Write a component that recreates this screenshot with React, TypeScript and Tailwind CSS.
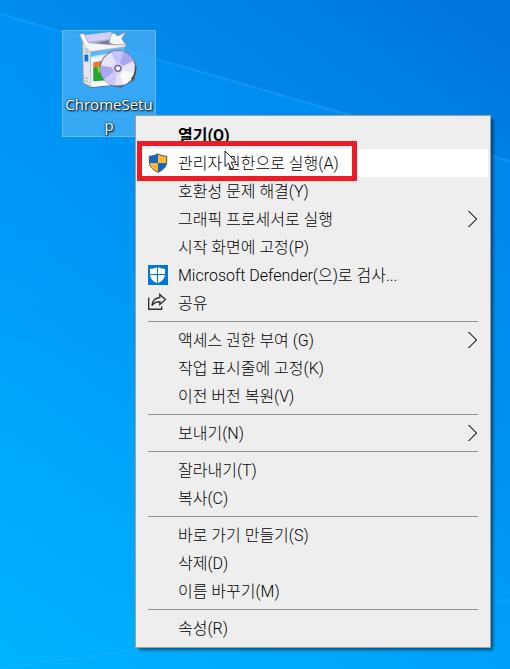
import React from "react";

type MenuItem = {
  label: string;
  icon?: React.ReactNode;
  bold?: boolean;
  active?: boolean;
  submenu?: boolean;
};

function AdminShieldIcon() {
  return (
    <svg width="20" height="20" viewBox="0 0 20 20" aria-hidden="true">
      <path d="M10 .8C7.5 2.2 4.5 3 1.2 3.2V10H10Z" fill="#1366c8" />
      <path d="M10 .8c2.5 1.4 5.5 2.2 8.8 2.4V10H10Z" fill="#fdb92a" />
      <path d="M1.3 10H10v9.4C5 17 2 14 1.3 10Z" fill="#fdb92a" />
      <path d="M18.7 10H10v9.4C15 17 18 14 18.7 10Z" fill="#1366c8" />
      <path
        d="M10 .9C7.5 2.3 4.5 3 1.3 3.2V9c0 4.5 3.2 8 8.7 10.3C15.5 17 18.7 13.5 18.7 9V3.2C15.5 3 12.5 2.3 10 .9Z"
        fill="none"
        stroke="#4b5660"
        strokeWidth="1"
      />
    </svg>
  );
}

function DefenderIcon() {
  return (
    <svg width="20" height="20" viewBox="0 0 20 20" aria-hidden="true">
      <rect width="20" height="20" fill="#0078d7" />
      <path
        d="M9.5 2C7.5 3.2 5 3.8 2 3.8V9c0 4.5 3 7.5 7.5 9.3C14 16.5 17 13.5 17 9V3.800C14 3.8 11.5 3.2 9.500 2Z"
        fill="#fff"
      />
      <path d="M9.5 1v18M1 9.5h17" stroke="#0078d7" strokeWidth="1" />
    </svg>
  );
}

function ShareIcon() {
  return (
    <svg
      width="20"
      height="20"
      viewBox="0 0 20 20"
      fill="none"
      stroke="#333"
      strokeWidth="1.4"
      aria-hidden="true"
    >
      <path d="M.7 4.500V16.300H13.700V13.500" />
      <path d="M11.8 1.500 17.500 6.500 11.800 11.500V8.700C8.500 8.700 6 9.500 4 12.500 4.500 8 7.500 4.800 11.800 4.500Z" />
    </svg>
  );
}

function SubmenuArrow() {
  return (
    <svg
      className="ml-auto"
      width="12"
      height="18"
      viewBox="0 0 12 18"
      fill="none"
      aria-hidden="true"
    >
      <path d="M2 1 10 9 2 17" stroke="#f0a050" />
      <path d="M3 1 11 9 3 17" stroke="#5c9ce0" />
      <path d="M2.5 1 10.5 9 2.5 17" stroke="#1a1018" strokeWidth="1" />
    </svg>
  );
}

function SetupIcon() {
  return (
    <svg width="60" height="60" viewBox="0 0 60 60" aria-hidden="true">
      <path d="M4 53 12 58 32 56 42 58 56 50 58 38 54 28Z" fill="#4a5560" opacity=".6" />

      {/* box body */}
      <path d="M3 11 11 20 12 57 4 53Z" fill="#e6e6ea" stroke="#9a9aa2" strokeWidth=".8" />
      <path d="M11 20 45 15 45 54 12 57Z" fill="#bfe6fb" />
      <path d="M11 20 45 15 45 20 11 26Z" fill="#62b8f6" />
      <path d="M12 28 24 25 22 50 12 57Z" fill="#eef8ff" />
      <path d="M13 52 32 50 32 55 12 57Z" fill="#fafafa" />
      <rect x="5" y="24" width="4" height="7" fill="#0d74d8" />
      <path d="M5 18 9 20M5 21 9 22M5 47 9 49M5 50 9 52" stroke="#a4a4ac" />

      {/* open lid */}
      <path d="M4 6 33 1 34 13 9 17Z" fill="#aeb4de" />
      <path d="M6 4 32 1 33 8 9 11Z" fill="#d4d0f8" />
      <path d="M12 13 32 9 32 14 12 17Z" fill="#77799c" />
      <path d="M0 3 5 3 9 12 32 14 47 13 47 16 11 21 5 15Z" fill="#f6f6f8" stroke="#a8a8b0" strokeWidth=".7" />
      <path d="M32 3 35 2 39 5 47 1 43 8 47 14 35 14 30 12Z" fill="#f4f4f6" stroke="#8e8e96" strokeWidth=".7" />

      <path d="M14 32 24 30 25 38 14 39Z" fill="#f27228" />
      <path d="M14 38 18 36 24 38 27 50 14 51Z" fill="#25a82c" />
      <path d="M18 36 24 35 24 43 19 42Z" fill="#8ed53c" />

      {/* disc */}
      <circle cx="39" cy="38" r="18" fill="#e6e4f8" stroke="#5e6070" strokeWidth="1" />
      <path d="M39 38 32 21.5A18 18 0 0 1 45 21.2Z" fill="#c6c2fc" />
      <path d="M39 38 45 21.2A18 18 0 0 1 55 30.5Z" fill="#aaa5f4" />
      <path d="M39 38 21.5 35A18 18 0 0 0 25 49.5Z" fill="#aaa5f4" />
      <path d="M39 38 25 49.5A18 18 0 0 0 36 55.6Z" fill="#cbc8fb" />
      <path d="M39 38 45 54.8A18 18 0 0 0 56 43Z" fill="#f8f8fc" />
      <circle cx="39" cy="38" r="5.5" fill="#ecc8ee" />
      <circle cx="39" cy="38" r="3" fill="#fff" stroke="#6a6c98" strokeWidth="1.5" />
      <path d="M53 49A18 18 0 0 0 57 36" fill="none" stroke="#444" strokeWidth="1.5" />
    </svg>
  );
}

function Pointer() {
  return (
    <svg
      className="pointer-events-none absolute left-[224px] top-[150px]"
      width="14"
      height="21"
      viewBox="0 0 14 21"
      aria-hidden="true"
    >
      <path
        d="M1 1V16.5L4.5 13.2 7 19 9.7 17.8 7.2 12.2H12Z"
        fill="#fff"
        stroke="#1c1c2c"
      />
    </svg>
  );
}

function Wallpaper() {
  return (
    <svg
      className="absolute inset-0 h-full w-full"
      viewBox="0 0 510 669"
      preserveAspectRatio="none"
      aria-hidden="true"
    >
      <defs>
        <linearGradient id="beam" x1="0" y1="0" x2="0" y2="1">
          <stop offset="0" stopColor="#0098ff" stopOpacity=".5" />
          <stop offset="1" stopColor="#0098ff" stopOpacity="0" />
        </linearGradient>
      </defs>
      <path d="M0 14 510 161V480L0 333Z" fill="url(#beam)" />
      <path d="M0 14 510 161" stroke="#3cb4ff" strokeOpacity=".3" strokeWidth="2" />
      <path d="M0 668 510 600" stroke="#3cb4ff" strokeOpacity=".2" strokeWidth="2" />
    </svg>
  );
}

const groups: MenuItem[][] = [
  [
    { label: "열기(O)", bold: true },
    { label: "관리자 권한으로 실행(A)", icon: <AdminShieldIcon />, active: true },
    { label: "호환성 문제 해결(Y)" },
    { label: "그래픽 프로세서로 실행", submenu: true },
    { label: "시작 화면에 고정(P)" },
    { label: "Microsoft Defender(으)로 검사...", icon: <DefenderIcon /> },
    { label: "공유", icon: <ShareIcon /> },
  ],
  [
    { label: "액세스 권한 부여 (G)", submenu: true },
    { label: "작업 표시줄에 고정(K)" },
    { label: "이전 버전 복원(V)" },
  ],
  [{ label: "보내기(N)", submenu: true }],
  [{ label: "잘라내기(T)" }, { label: "복사(C)" }],
  [
    { label: "바로 가기 만들기(S)" },
    { label: "삭제(D)" },
    { label: "이름 바꾸기(M)" },
  ],
  [{ label: "속성(R)" }],
];

function MenuRow({ item }: { item: MenuItem }) {
  return (
    <button
      type="button"
      role="menuitem"
      className={`flex h-7 w-full items-center px-[10px] text-left ${
        item.active ? "bg-white" : ""
      } ${item.bold ? "font-bold" : "font-light"}`}
    >
      <span className="mr-[10px] flex size-5 shrink-0">{item.icon}</span>
      <span className="pt-[2px] whitespace-nowrap">{item.label}</span>
      {item.submenu && <SubmenuArrow />}
    </button>
  );
}

export default function App() {
  return (
    <main className="relative min-h-screen overflow-hidden bg-[linear-gradient(215deg,#0074dc_0%,#008eee_38%,#00a0f8_65%,#00b4ff_100%)]">
      <Wallpaper />

      <div className="relative pt-[30px] pl-[62px]">
        <button
          type="button"
          className="flex h-[107px] w-[94px] flex-col items-center border border-[#63bdf8] bg-[#5ab8f5]/60 font-['Open_Sans',sans-serif] text-white"
        >
          <SetupIcon />
          <span className="mt-1 w-full text-[15px] leading-[21px] break-all [text-shadow:1px_1px_2px_#000,0_0_2px_#000]">
            ChromeSetup
          </span>
        </button>
      </div>

      <div
        role="menu"
        className="absolute top-[115px] left-[135px] w-[356px] border border-[#a0a0a0] bg-[#eeeeee] px-[2px] py-[5px] font-['Roboto','Noto_Sans_CJK_KR',sans-serif] text-[16px] text-black shadow-[3px_3px_3px_-1px_rgba(0,0,0,0.5)]"
      >
        {groups.map((items, index) => (
          <div key={index} role="group">
            {index > 0 && <hr className="mx-[10px] my-1 border-[#919191]" />}
            {items.map((item) => (
              <MenuRow key={item.label} item={item} />
            ))}
          </div>
        ))}
      </div>

      <div className="pointer-events-none absolute top-[141px] left-[137px] h-10 w-[220px] border-5 border-[#ed1c24]" />
      <Pointer />
    </main>
  );
}
